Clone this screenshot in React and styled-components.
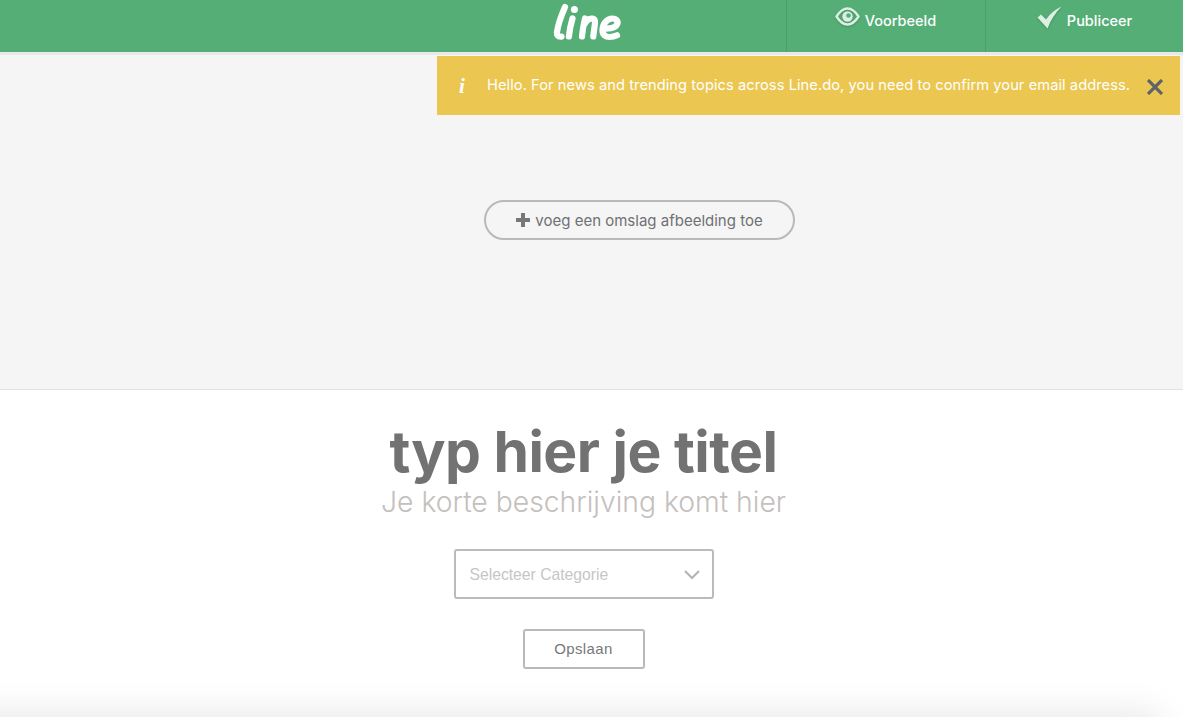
import React from 'react';
import styled, { createGlobalStyle } from 'styled-components';

const Global = createGlobalStyle`
  html, body { margin: 0; padding: 0; height: 100%; background: #fff; overflow: hidden; }
  body { font-family: "Inter", "Open Sans", sans-serif; }
  * { box-sizing: border-box; }
`;

const Page = styled.div`
  position: relative;
  width: 1183px;
  height: 717px;
  overflow: hidden;
  background: #fff;
`;

const Header = styled.header`
  height: 52px;
  background: #54ae76;
  display: grid;
  grid-template-columns: 786px 199px 198px;
`;

const LogoSlot = styled.div`
  display: flex;
  justify-content: flex-start;
  padding: 3px 0 0 552px;
`;

const NavItem = styled.a`
  display: flex;
  align-items: flex-start;
  justify-content: center;
  gap: 5px;
  padding: ${p => p.$top}px ${p => p.$end}px 0 0;
  border-left: 1px solid #4b9f6b;
  color: #fff;
  font-size: 14.5px;
  font-weight: 500;
  line-height: 18px;
`;

const NavLabel = styled.span`
  margin-top: ${p => p.$top}px;
`;

const Cover = styled.section`
  height: 338px;
  background: #f5f5f5;
  border-top: 3px solid #e8e8e8;
  border-bottom: 1px solid #e2e2e2;
  display: flex;
  justify-content: center;
  padding: 145px 0 0 96px;
`;

const CoverButton = styled.button`
  width: 311px;
  height: 40px;
  border: 2px solid #b9b9b9;
  border-radius: 20px;
  background: transparent;
  color: #6f7074;
  font-family: inherit;
  font-size: 15px;
  display: flex;
  align-items: center;
  justify-content: center;
  gap: 5px;
  padding: 0;
`;

const Banner = styled.div`
  position: absolute;
  top: 56px;
  left: 437px;
  width: 743px;
  height: 59px;
  background: #ebc752;
  color: #fff;
  display: flex;
  align-items: center;
  font-size: 14.65px;
  font-weight: 400;
  letter-spacing: 0.07px;
`;

const InfoGlyph = styled.span`
  width: 50px;
  flex: none;
  text-align: center;
  font-family: "Liberation Serif", serif;
  font-style: italic;
  font-weight: 700;
  font-size: 21px;
  margin-top: 2px;
`;

const BannerText = styled.span`
  flex: 1;
  white-space: nowrap;
  margin-top: -1px;
`;

const Close = styled.svg`
  flex: none;
  margin: 2px 17px 0 0;
`;

const Content = styled.main`
  display: flex;
  flex-direction: column;
  align-items: center;
  padding: 31px 16px 0 0;
`;

const Title = styled.h1`
  margin: 0;
  font-size: 57px;
  line-height: 62px;
  font-weight: 700;
  letter-spacing: -0.5px;
  color: #727272;
  white-space: nowrap;
`;

const Subtitle = styled.p`
  margin: 2px 0 0;
  font-size: 28.3px;
  line-height: 34px;
  font-weight: 300;
  color: #c4c0be;
  white-space: nowrap;
`;

const Select = styled.div`
  margin-top: 30px;
  width: 260px;
  height: 50px;
  border: 2px solid #bbb;
  border-radius: 3px;
  display: flex;
  align-items: center;
  justify-content: space-between;
  padding: 1px 12px 0 14px;
  font-family: "Liberation Sans", sans-serif;
  font-size: 15.7px;
  color: #c6c6c6;
`;

const SaveButton = styled.button`
  margin-top: 30px;
  width: 122px;
  height: 40px;
  border: 2px solid #b9b9b9;
  border-radius: 3px;
  background: #fff;
  color: #77777a;
  font-family: "Liberation Sans", sans-serif;
  font-size: 15px;
  letter-spacing: 0.4px;
  padding: 0 0 2px;
`;

const BottomShade = styled.div`
  position: absolute;
  left: -60px;
  width: 1212px;
  top: 722px;
  height: 30px;
  background: #ddd;
  box-shadow: 0 0 36px 8px rgba(0, 0, 0, 0.1);
`;

const Logo = () => (
  <svg width="72" height="38" viewBox="0 0 72 38" fill="none" stroke="#fff" strokeWidth="6.200" strokeLinecap="round" strokeLinejoin="round">
    <path d="M13 4C9.500 12 6 22 5 29c-.4 3.400 1 5 4.500 4.600" />
    <path d="M20.500 15.500c-1.500 5-3 11-3.600 18" />
    <circle cx="22.400" cy="6.400" r="3.500" fill="#fff" stroke="none" />
    <path d="M30 33.500c.5-6 1.600-12 3-18M32 22c2.200-4.500 5.200-6.600 8-6.400 3 .2 3.300 2.500 2.900 5.400-.4 3.500-1.200 8-1.600 12.500" />
    <path d="M51 25.500c5 .3 13-.3 14.500-5 .7-3-2-5-5-5-6 0-10 6-10 12 0 4.500 3 6.500 7 6.500 3 0 5.500-.7 7.500-1.700" />
  </svg>
);

const Eye = () => (
  <svg width="25" height="20" viewBox="0 0 25 20" style={{ filter: 'drop-shadow(0 1px 1px rgba(0,0,0,.18))' }}>
    <path d="M1.500 9.500C5 4 8.500 1.500 12.500 1.500s7.500 2.500 11 8c-3.500 5.500-7 8-11 8s-7.500-2.500-11-8z" fill="none" stroke="#dcefe3" strokeWidth="2.400" />
    <circle cx="12.500" cy="9.500" r="5.200" fill="#dcefe3" />
    <circle cx="13.500" cy="8.500" r="2.300" fill="#54ae76" />
  </svg>
);

const Check = () => (
  <svg width="25" height="23" viewBox="0 0 25 23" style={{ filter: 'drop-shadow(0 1px 1px rgba(0,0,0,.18))' }}>
    <path d="M0.500 11.500L4 8.500L9 13.500C13 8 18 3.500 24.500 0.500C18.500 6.500 14 13.500 10.500 22.500z" fill="#dcefe3" />
  </svg>
);

const Plus = () => (
  <svg width="14" height="14" viewBox="0 0 14 14" fill="#77777a">
    <path d="M5 0h4v5h5v4H9v5H5V9H0V5h5z" />
  </svg>
);

const Chevron = () => (
  <svg width="16" height="10" viewBox="0 0 16 10" fill="none" stroke="#b5b5b5" strokeWidth="2.200">
    <path d="M1 1l7 7 7-7" />
  </svg>
);

export default function App() {
  return (
    <Page>
      <Global />
      <Header>
        <LogoSlot><Logo /></LogoSlot>
        <NavItem $top={7} $end={1}><Eye /><NavLabel $top={5}>Voorbeeld</NavLabel></NavItem>
        <NavItem $top={6} $end={0}><Check /><NavLabel $top={6}>Publiceer</NavLabel></NavItem>
      </Header>
      <Cover>
        <CoverButton><Plus />voeg een omslag afbeelding toe</CoverButton>
      </Cover>
      <Banner>
        <InfoGlyph>i</InfoGlyph>
        <BannerText>Hello. For news and trending topics across Line.do, you need to confirm your email address.</BannerText>
        <Close width="16" height="16" viewBox="0 0 16 16" fill="none" stroke="#5f6368" strokeWidth="3.200">
          <path d="M1 1l14 14M15 1L1 15" />
        </Close>
      </Banner>
      <Content>
        <Title>typ hier je titel</Title>
        <Subtitle>Je korte beschrijving komt hier</Subtitle>
        <Select>Selecteer Categorie<Chevron /></Select>
        <SaveButton>Opslaan</SaveButton>
      </Content>
      <BottomShade />
    </Page>
  );
}
